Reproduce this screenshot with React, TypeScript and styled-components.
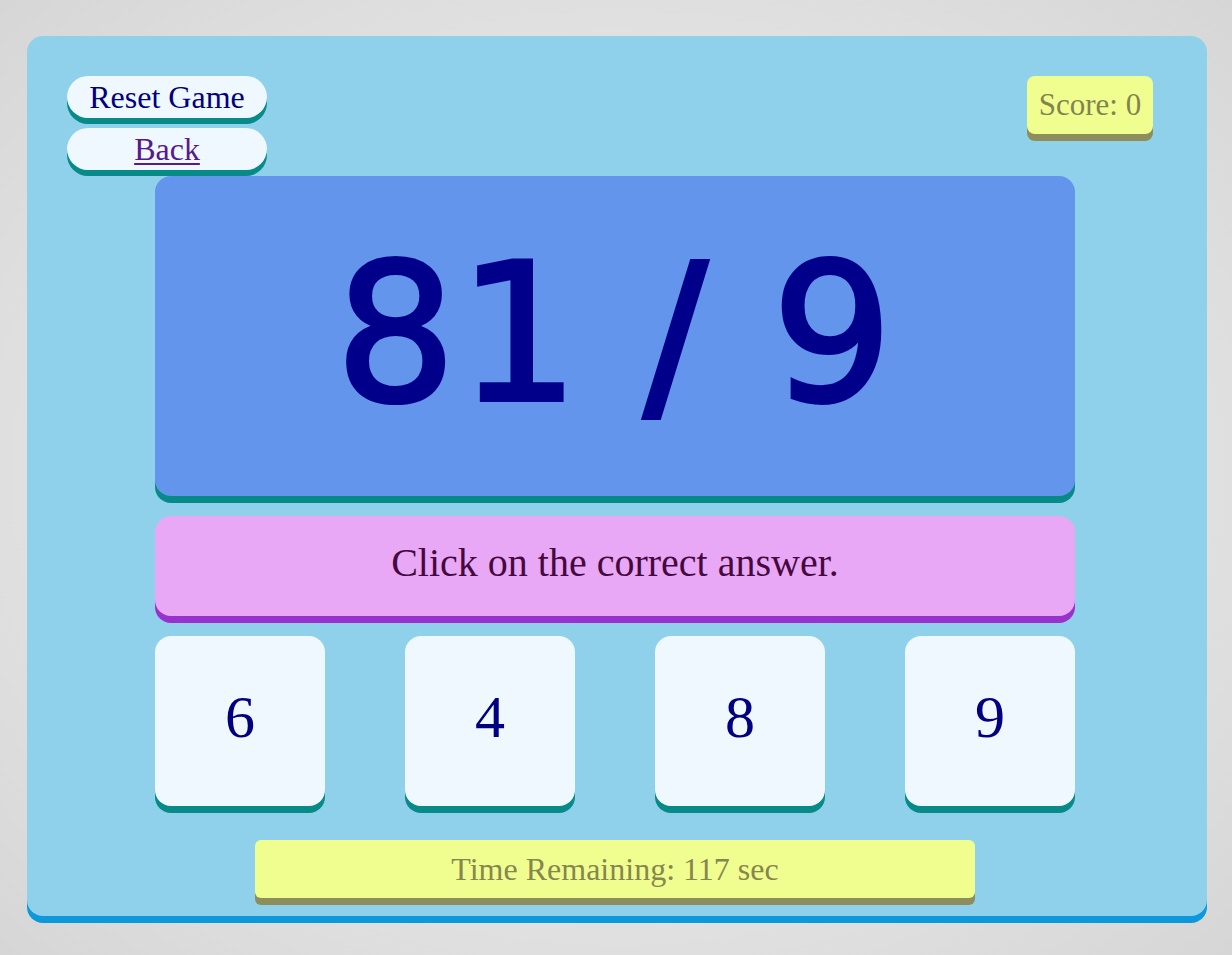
import React from "react";
import styled, { createGlobalStyle } from "styled-components";

const Global = createGlobalStyle`
  html, body { margin: 0; padding: 0; }
  body {
    min-height: 955px;
    background: radial-gradient(ellipse at center, #f2f2f2 0%, #e4e4e4 55%, #d6d6d6 100%);
    font-family: "Liberation Serif", "Times New Roman", serif;
  }
  #root { padding-top: 36px; }
`;

const Board = styled.div`
  box-sizing: border-box;
  width: 1180px;
  height: 880px;
  margin: 0 auto;
  transform: translateX(1px);
  background: #8fd1ea;
  border-radius: 16px;
  box-shadow: 0 7px 0 #0e98dc;
  padding: 40px 4px 0 0;
  display: flex;
  flex-direction: column;
  align-items: center;
`;

const Header = styled.div`
  box-sizing: border-box;
  width: 100%;
  height: 100px;
  padding: 0 50px 0 40px;
  display: flex;
  justify-content: space-between;
  align-items: flex-start;
`;

const NavColumn = styled.div`
  display: flex;
  flex-direction: column;
  gap: 10px;
`;

const PillButton = styled.a<{ $link?: boolean }>`
  box-sizing: border-box;
  width: 200px;
  height: 42px;
  border-radius: 21px;
  background: #f0f8ff;
  box-shadow: 0 6px 0 #088a88;
  display: flex;
  align-items: center;
  justify-content: center;
  font-size: 32px;
  color: ${(p) => (p.$link ? "#551a8b" : "#000080")};
  text-decoration: ${(p) => (p.$link ? "underline" : "none")};
  text-decoration-thickness: 2px;
  text-underline-offset: 3px;
  cursor: pointer;
`;

const ScoreBox = styled.div`
  box-sizing: border-box;
  width: 126px;
  height: 58px;
  border-radius: 8px;
  background: #f0fe90;
  box-shadow: 0 7px 0 #8e8e5c;
  display: flex;
  align-items: center;
  justify-content: center;
  font-size: 31px;
  color: #83834f;
`;

const ProblemCard = styled.div`
  width: 920px;
  height: 320px;
  border-radius: 16px;
  background: #6495ed;
  box-shadow: 0 7px 0 #088a88;
  display: flex;
  align-items: center;
  justify-content: center;
  font-family: "DejaVu Sans", sans-serif;
  font-size: 190px;
  letter-spacing: 2px;
  color: #00008b;
  line-height: 1;
  padding-bottom: 2px;
  box-sizing: border-box;
  -webkit-text-stroke: 4px #00008b;
`;

const Instruction = styled.div`
  margin-top: 20px;
  width: 920px;
  height: 100px;
  border-radius: 16px;
  background: #e8a8f5;
  box-shadow: 0 7px 0 #9932cc;
  display: flex;
  align-items: center;
  justify-content: center;
  font-size: 40px;
  color: #46083f;
  padding-bottom: 8px;
  box-sizing: border-box;
`;

const Answers = styled.div`
  margin-top: 20px;
  width: 920px;
  display: flex;
  justify-content: space-between;
`;

const AnswerCard = styled.div`
  width: 170px;
  height: 170px;
  border-radius: 16px;
  background: #f0f8ff;
  box-shadow: 0 7px 0 #088a88;
  display: flex;
  align-items: center;
  justify-content: center;
  font-size: 60px;
  color: #000080;
  padding-bottom: 8px;
  box-sizing: border-box;
  cursor: pointer;
`;

const Timer = styled.div`
  margin-top: 34px;
  width: 720px;
  height: 58px;
  border-radius: 6px;
  background: #f0fe90;
  box-shadow: 0 7px 0 #8e8e5c;
  display: flex;
  align-items: center;
  justify-content: center;
  font-size: 32px;
  color: #86864f;
`;

export default function App() {
  const answers = [6, 4, 8, 9];
  return (
    <>
      <Global />
      <Board>
        <Header>
          <NavColumn>
            <PillButton>Reset Game</PillButton>
            <PillButton $link href="#">Back</PillButton>
          </NavColumn>
          <ScoreBox>Score: 0</ScoreBox>
        </Header>
        <ProblemCard>81 / 9</ProblemCard>
        <Instruction>Click on the correct answer.</Instruction>
        <Answers>
          {answers.map((a) => (
            <AnswerCard key={a}>{a}</AnswerCard>
          ))}
        </Answers>
        <Timer>Time Remaining: 117 sec</Timer>
      </Board>
    </>
  );
}
